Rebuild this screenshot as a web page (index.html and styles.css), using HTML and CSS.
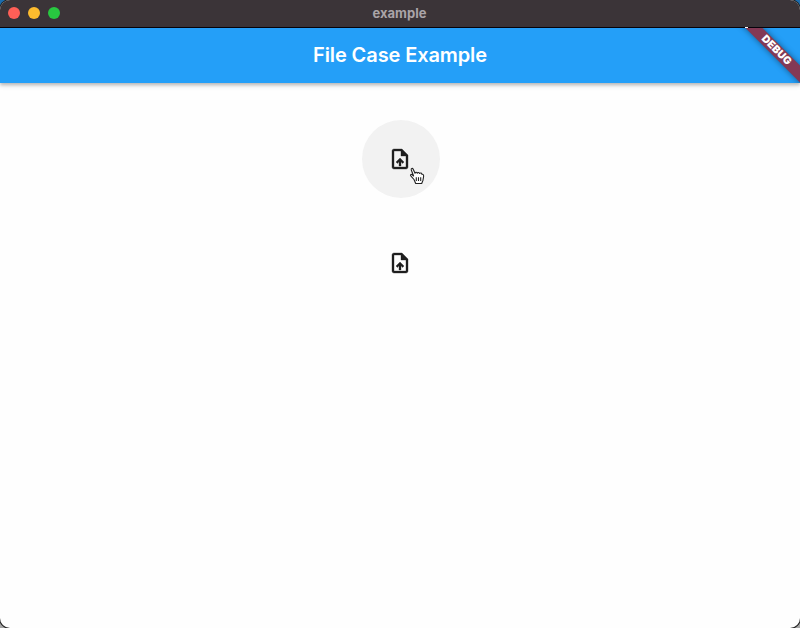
FILE: index.html
```html
<!DOCTYPE html>
<html lang="en">
<head>
<meta charset="utf-8">
<title>example</title>
<link rel="stylesheet" href="styles.css">
</head>
<body>
<div class="window">
  <div class="titlebar">
    <div class="lights"><i class="close"></i><i class="minimize"></i><i class="expand"></i></div>
    <span class="window-title">example</span>
  </div>
  <header class="appbar">
    <h1>File Case Example</h1>
    <div class="banner-clip"><div class="banner"><span>DEBUG</span></div></div>
    <i class="notch"></i>
  </header>
  <main class="content">
    <button class="upload hovered" aria-label="Upload file">
      <svg class="icon" viewBox="0 0 24 24"><path d="M14 2H6c-1.1 0-2 .9-2 2v16c0 1.1.9 2 2 2h12c1.1 0 2-.9 2-2V8l-6-6zm4 18H6V4h7v5h5v11zM8 15.01l1.41 1.41L11 14.84V19h2v-4.16l1.59 1.59L16 15.01 12.01 11 8 15.01z"/></svg>
      <svg class="cursor" viewBox="0 0 16 18"><path d="M5 12.5 2 9.2C.8 7.8 2 6.8 3.3 7.8L4.6 9 2.3 3C1.8 1.4 3.5.7 4.2 2.2L6 6.3C6.3 5 7.8 5 8.3 6.2 8.8 5.2 10.2 5.3 10.6 6.5 11.4 5.6 12.7 6 12.9 7.3 14.2 7 14.8 8 14.6 9.5L14 13.2 12.7 16.5H6.7Z"/><path d="M7.3 10.2v3.7M9.5 10.2v3.7M11.7 10.2v3.7"/></svg>
    </button>
    <button class="upload" aria-label="Upload file">
      <svg class="icon" viewBox="0 0 24 24"><path d="M14 2H6c-1.1 0-2 .9-2 2v16c0 1.1.9 2 2 2h12c1.1 0 2-.9 2-2V8l-6-6zm4 18H6V4h7v5h5v11zM8 15.01l1.41 1.41L11 14.84V19h2v-4.16l1.59 1.59L16 15.01 12.01 11 8 15.01z"/></svg>
    </button>
  </main>
</div>
</body>
</html>
```
FILE: styles.css
```css
* { box-sizing: border-box; }
body {
  margin: 0;
  background: linear-gradient(#1b6cae 0 50%, #a5a5a5 50%);
  font-family: Inter, "Liberation Sans", sans-serif;
}
.window {
  width: 800px;
  height: 628px;
  display: flex;
  flex-direction: column;
  overflow: hidden;
  border-radius: 10px;
  background: #fefefe;
  box-shadow: 0 0 0 1px #222;
}
.titlebar {
  height: 28px;
  flex: none;
  display: grid;
  grid-template-columns: 1fr auto 1fr;
  align-items: center;
  padding: 0 9px 1px 8px;
  background: #3b3438;
  border-bottom: 1px solid #08050d;
}
.lights { display: flex; gap: 8px; }
.lights i { width: 12px; height: 12px; border-radius: 50%; }
.close { background: #ff5f57; }
.minimize { background: #febc2e; }
.expand { background: #28c840; }
.window-title {
  padding-bottom: 1px;
  color: #aaa4a8;
  font-size: 13px;
  line-height: 16px;
  font-weight: 700;
  letter-spacing: 0;
}
.appbar {
  position: relative;
  height: 55px;
  flex: none;
  display: flex;
  align-items: center;
  justify-content: center;
  background: #249ff8;
  box-shadow: 0 2px 3px rgba(0,0,0,.2), 0 3px 5px rgba(0,0,0,.1);
}
h1 {
  margin: 0;
  padding-bottom: 2px;
  color: #fff;
  font-size: 20px;
  line-height: 24px;
  font-weight: 600;
  letter-spacing: -0.1px;
}
.banner-clip {
  position: absolute;
  top: 0;
  right: 0;
  width: 70px;
  height: 55px;
  overflow: hidden;
}
.banner {
  position: absolute;
  left: -4px;
  top: 16px;
  width: 100px;
  height: 12px;
  transform: rotate(45deg);
  background: #833955;
  color: #fff;
  text-align: center;
  font-size: 10.5px;
  line-height: 12px;
  font-weight: 900;
  letter-spacing: 0.2px;
  box-shadow: 0 0 6px rgba(0,0,0,.45);
}
.banner span { padding-left: 1px; }
.notch {
  position: absolute;
  top: -1px;
  left: 745px;
  width: 3px;
  height: 1px;
  background: #fff;
}
.content {
  flex: 1;
  display: flex;
  flex-direction: column;
  align-items: center;
  gap: 26px;
  padding-top: 37px;
}
.upload {
  position: relative;
  width: 78px;
  height: 78px;
  display: grid;
  place-items: center;
  padding: 0;
  border: 0;
  border-radius: 50%;
  background: none;
}
.hovered { background: #f2f2f2; left: 1px; }
.icon {
  width: 24px;
  height: 24px;
  fill: #1f1f1f;
  stroke: #1f1f1f;
  stroke-width: 0.35;
}
.hovered .icon { margin-right: 2px; }
.cursor {
  position: absolute;
  left: 47px;
  top: 47px;
  width: 16px;
  height: 18px;
  fill: #fff;
  stroke: #222;
  stroke-width: 1.1;
  stroke-linejoin: round;
}
```
